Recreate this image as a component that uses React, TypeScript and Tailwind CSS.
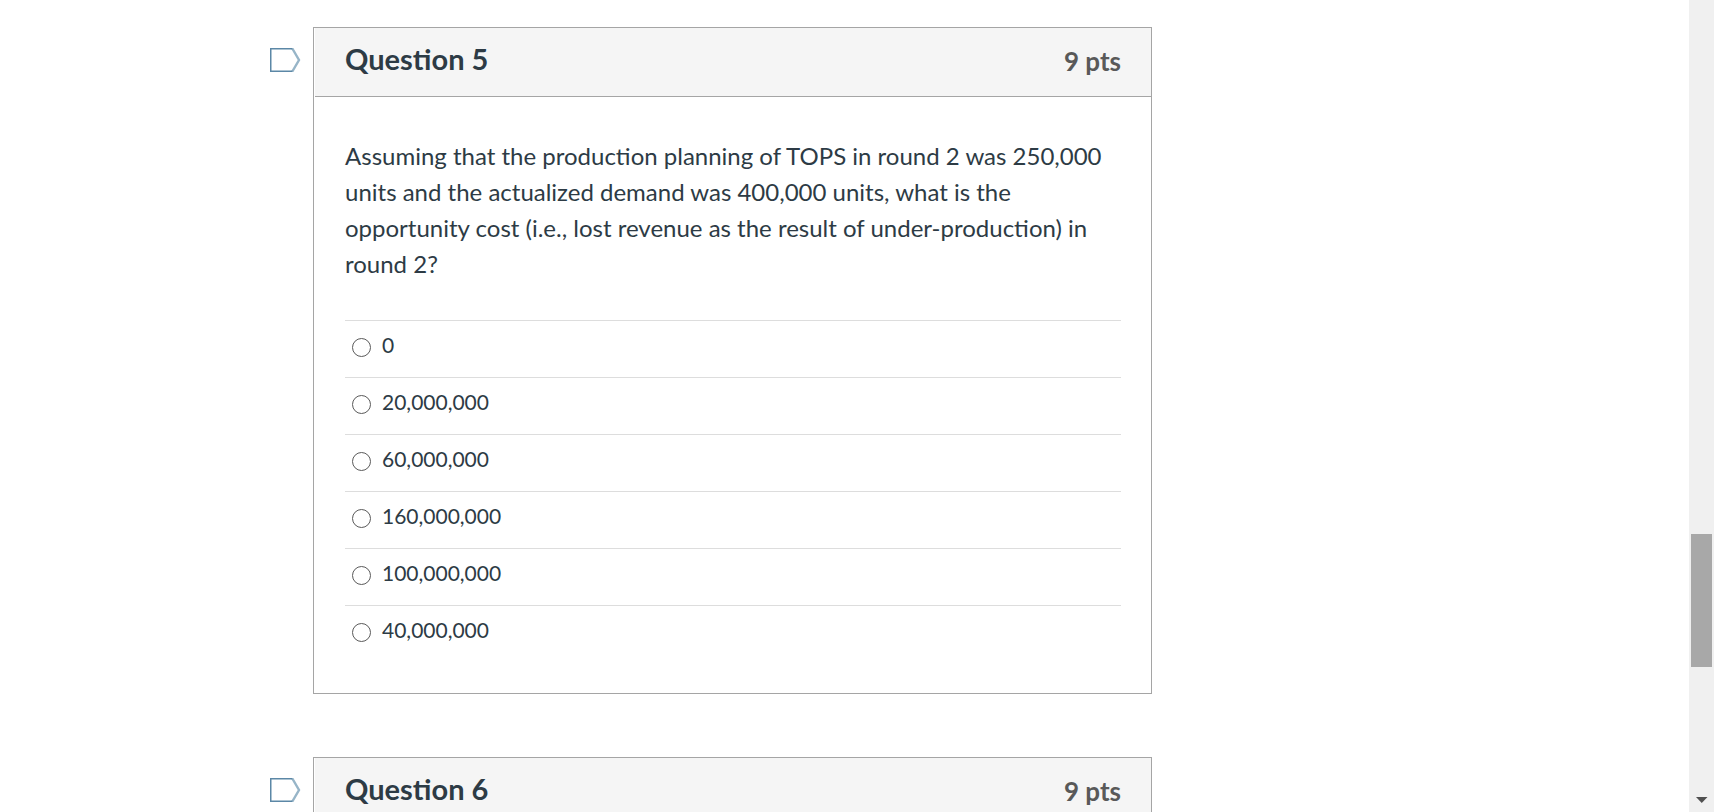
import { useState } from 'react';

type Question = {
    id: number;
    points: number;
    text?: string;
    answers?: string[];
};

const questions: Question[] = [
    {
        id: 5,
        points: 9,
        text: 'Assuming that the production planning of TOPS in round 2 was 250,000 units and the actualized demand was 400,000 units, what is the opportunity cost (i.e., lost revenue as the result of under-production) in round 2?',
        answers: [
            '0',
            '20,000,000',
            '60,000,000',
            '160,000,000',
            '100,000,000',
            '40,000,000',
        ],
    },
    { id: 6, points: 9 },
];

const FlagButton = ({ id }: { id: number }) => {
    const [flagged, setFlagged] = useState(false);

    return (
        <button
            type="button"
            aria-label={`Flag question ${id}`}
            aria-pressed={flagged}
            onClick={() => setFlagged(!flagged)}
            className="mt-[21px] h-6 w-8 shrink-0 cursor-pointer">
            <svg viewBox="0 0 32 24" className="h-6 w-8" fill="none">
                <path
                    d="M22.3 .5 29 12 22.3 23.5"
                    stroke="#97b5c8"
                    strokeWidth="2.4"
                />
                <path
                    d="M22.5 .6H.6V23.4H22.5"
                    stroke="#5b87a6"
                    strokeWidth="1.8"
                    fill={flagged ? '#fc5e13' : 'none'}
                />
            </svg>
        </button>
    );
};

const QuestionCard = ({ question }: { question: Question }) => {
    const { id, points, text, answers } = question;

    return (
        <div className="flex gap-[11px]">
            <FlagButton id={id} />
            <section className="min-w-0 flex-1 border border-[#a5a5a5] bg-white pl-px">
                <header className="flex h-[69px] items-start justify-between border-b border-[#a5a5a5] bg-[#f5f5f5] px-[30px] pt-[11px]">
                    <h2
                        id={`question-${id}-title`}
                        className="text-[29px] leading-10 font-bold">
                        Question {id}
                    </h2>
                    <span className="text-[26px] leading-[44px] font-bold text-[#595959]">
                        {points} pts
                    </span>
                </header>
                {text && answers && (
                    <div className="px-[30px] pt-[41px] pb-[31px]">
                        <p className="text-2xl leading-9">{text}</p>
                        <fieldset
                            aria-labelledby={`question-${id}-title`}
                            className="mt-[38px]">
                            {answers.map((answer) => (
                                <label
                                    key={answer}
                                    className="flex h-[57px] cursor-pointer items-start border-t border-[#dddddd] pl-[7px]">
                                    <input
                                        type="radio"
                                        name={`question-${id}`}
                                        value={answer}
                                        className="mt-[17px] mr-[11px] size-[19px] appearance-none rounded-full border border-[#5a5a5a] bg-white checked:border-[6px] checked:border-[#0075ff]"
                                    />
                                    <span className="pt-[9px] text-[21px] leading-[30px]">
                                        {answer}
                                    </span>
                                </label>
                            ))}
                        </fieldset>
                    </div>
                )}
            </section>
        </div>
    );
};

const ScrollTrack = () => (
    <div
        aria-hidden="true"
        className="flex w-[25px] shrink-0 flex-col items-center justify-end bg-[#f0f0f0] pb-[9px]">
        <div className="mb-[130px] h-[133px] w-[21px] bg-[#a8a8a8]" />
        <svg viewBox="0 0 12 6" className="h-1.5 w-3" fill="#505050">
            <path d="M0 0H11.5L5.75 6Z" />
        </svg>
    </div>
);

export default function App() {
    return (
        <div className="flex h-screen overflow-hidden bg-white font-['Lato',sans-serif] text-[#2d3b45]">
            <main className="flex min-w-0 flex-1 flex-col gap-[63px] pt-[27px] pl-[270px]">
                {questions.map((question) => (
                    <div key={question.id} className="w-full max-w-[882px]">
                        <QuestionCard question={question} />
                    </div>
                ))}
            </main>
            <ScrollTrack />
        </div>
    );
}
